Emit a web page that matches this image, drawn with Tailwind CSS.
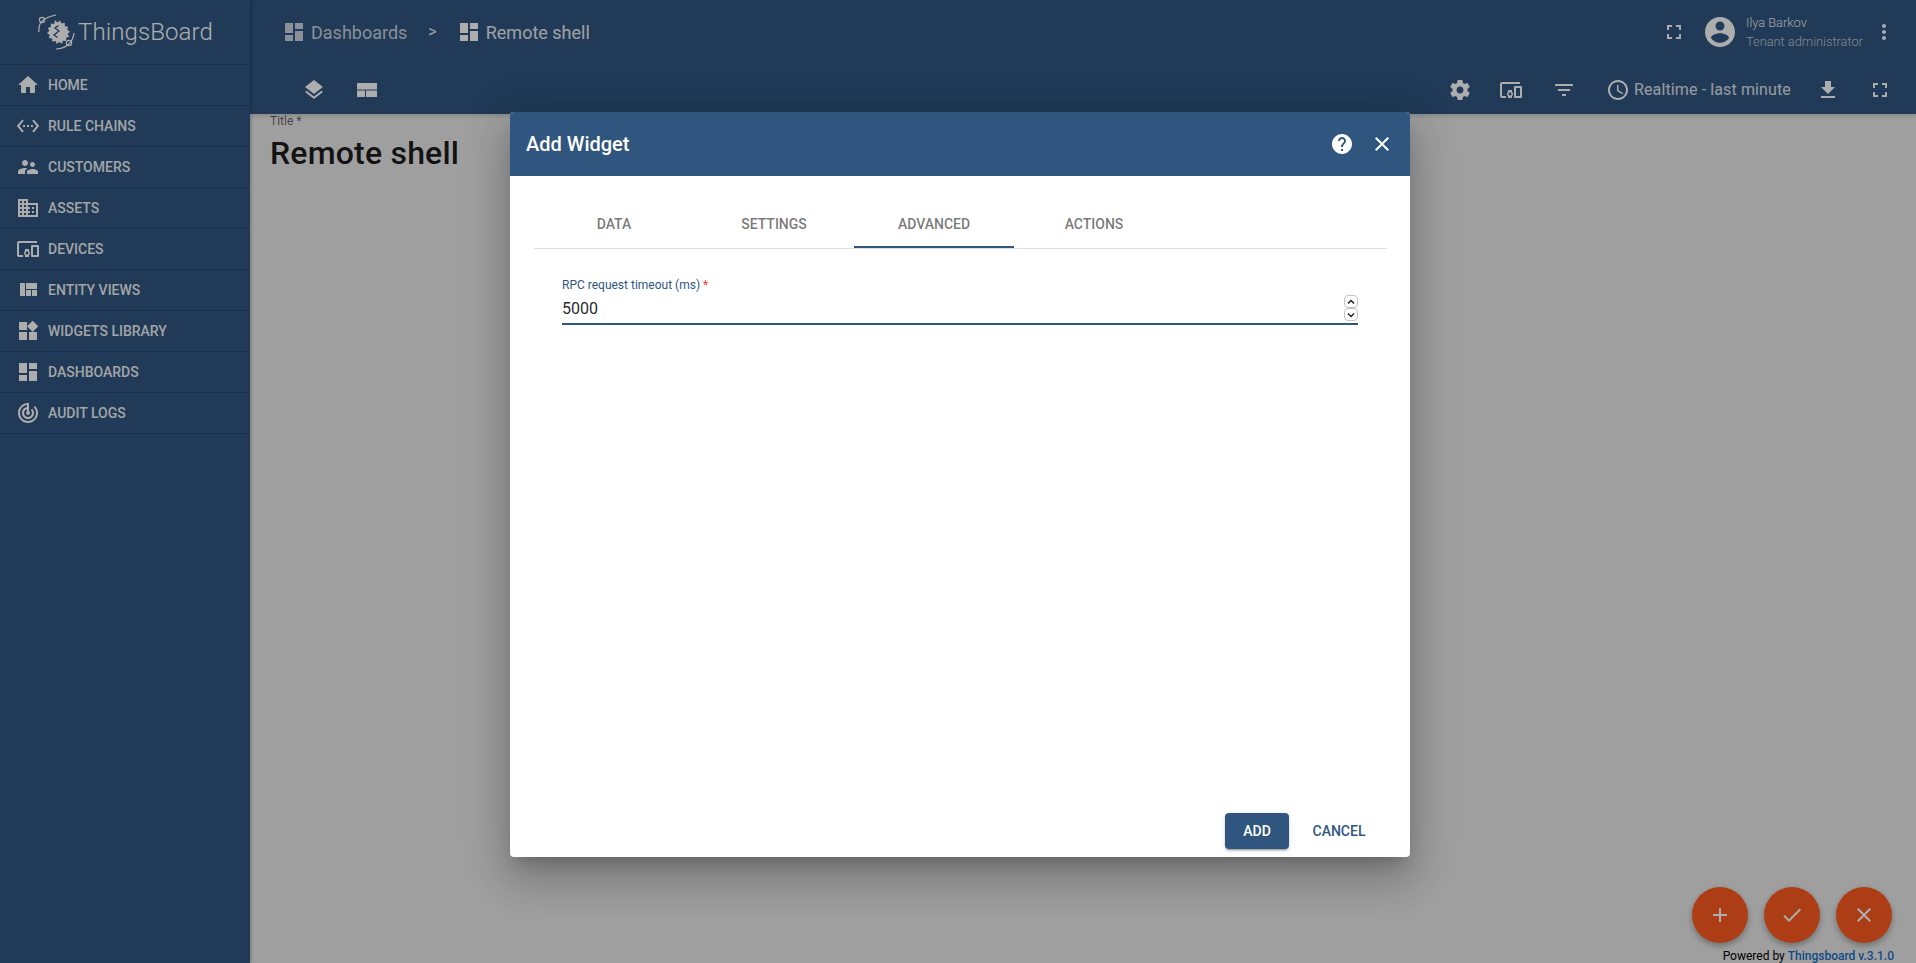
<!DOCTYPE html>
<html>
<head>
<meta charset="utf-8">
<script src="https://cdn.jsdelivr.net/npm/@tailwindcss/browser@4"></script>
<title>ThingsBoard</title>
</head>
<body class="font-['Roboto',sans-serif] overflow-hidden">
<div class="relative flex h-[963px] w-[1916px] overflow-hidden bg-[#ebebeb]">
  <!-- Sidebar -->
  <aside class="relative z-10 flex w-[250px] shrink-0 flex-col bg-[#305680] text-white shadow-[0_0_4px_rgba(0,0,0,0.4)]">
    <div class="flex h-[65px] items-center border-b border-black/15 pl-[37px]">
      <svg class="h-[40px] w-[40px] shrink-0" viewBox="0 0 40 40" fill="none" stroke="#fff">
        <path d="M2 20 C1 12 4 6 19 3" stroke-width="1.2"/>
        <circle cx="5" cy="8" r="2.6" stroke-width="1.2"/>
        <path d="M19 37 C28 37 36 31 37 21" stroke-width="1.2"/>
        <circle cx="32" cy="31" r="2.6" stroke-width="1.2"/>
        <path fill="#fff" stroke="none" d="M18 8l2.5 2.6 2.7-2.2 1.3 3.2 3.2-.8.2 3.4 3.3.5-1 3.1 2.8 1.9-2.4 2.3 1.7 2.8-3.2 1 .2 3.2-3.3-.3-1 3.1-2.8-1.9-2.4 2.2-1.2-3.1-3.2.8-.3-3.3-3.3-.5 1-3.1-2.8-1.8 2.4-2.4-1.7-2.8 3.2-1-.1-3.3 3.3.3z"/>
        <path d="M21.5 13.5l-3.5 2.5 4 3-5 4 3.5 2.5" stroke="#305680" stroke-width="1.3"/>
      </svg>
      <span class="ml-[1px] text-[24px] font-light leading-none tracking-[0.1px] text-white">ThingsBoard</span>
    </div>
    <nav class="text-[14px] font-medium uppercase text-white/95">
      <a class="flex h-[41px] items-center border-b border-black/15 pl-[16px]"><svg class="h-[24px] w-[24px] shrink-0" viewBox="0 0 24 24" fill="#fff"><path d="M10 20v-6h4v6h5v-8h3L12 3 2 12h3v8z"/></svg><span class="ml-[8px]">Home</span></a>
      <a class="flex h-[41px] items-center border-b border-black/15 pl-[16px]"><svg class="h-[24px] w-[24px] shrink-0" viewBox="0 0 24 24" fill="#fff"><path d="M7.77 6.76L6.23 5.48.82 12l5.41 6.52 1.54-1.28L3.42 12l4.35-5.24zM7 13h2v-2H7v2zm10-2h-2v2h2v-2zm-6 2h2v-2h-2v2zm6.77-7.52l-1.54 1.28L20.58 12l-4.35 5.24 1.54 1.28L23.18 12l-5.41-6.52z"/></svg><span class="ml-[8px]">Rule chains</span></a>
      <a class="flex h-[41px] items-center border-b border-black/15 pl-[16px]"><svg class="h-[24px] w-[24px] shrink-0" viewBox="0 0 24 24" fill="#fff"><path d="M16.5 12c1.38 0 2.49-1.12 2.49-2.5S17.88 7 16.5 7C15.12 7 14 8.12 14 9.5s1.12 2.5 2.5 2.5zM9 11c1.66 0 2.99-1.34 2.99-3S10.66 5 9 5C7.34 5 6 6.34 6 8s1.34 3 3 3zm7.5 3c-1.83 0-5.5.92-5.5 2.75V19h11v-2.25c0-1.83-3.67-2.75-5.5-2.75zM9 13c-2.33 0-7 1.17-7 3.5V19h7v-2.25c0-.85.33-2.34 2.37-3.47C10.5 13.1 9.66 13 9 13z"/></svg><span class="ml-[8px]">Customers</span></a>
      <a class="flex h-[41px] items-center border-b border-black/15 pl-[16px]"><svg class="h-[24px] w-[24px] shrink-0" viewBox="0 0 24 24" fill="#fff"><path d="M12 7V3H2v18h20V7H12zM6 19H4v-2h2v2zm0-4H4v-2h2v2zm0-4H4V9h2v2zm0-4H4V5h2v2zm4 12H8v-2h2v2zm0-4H8v-2h2v2zm0-4H8V9h2v2zm0-4H8V5h2v2zm10 12h-8v-2h2v-2h-2v-2h2v-2h-2V9h8v10zm-2-8h-2v2h2v-2zm0 4h-2v2h2v-2z"/></svg><span class="ml-[8px]">Assets</span></a>
      <a class="flex h-[41px] items-center border-b border-black/15 pl-[16px]"><svg class="h-[24px] w-[24px] shrink-0" viewBox="0 0 24 24" fill="#fff"><path d="M3 6h18V4H3c-1.1 0-2 .9-2 2v12c0 1.1.9 2 2 2h4v-2H3V6zm10 6H9v1.78c-.61.55-1 1.33-1 2.22s.39 1.67 1 2.22V20h4v-1.78c.61-.55 1-1.34 1-2.22s-.39-1.67-1-2.22V12zm-2 5.5c-.83 0-1.5-.67-1.5-1.5s.67-1.5 1.5-1.5 1.5.67 1.5 1.5-.67 1.5-1.5 1.5zM22 8h-6c-.5 0-1 .5-1 1v10c0 .5.5 1 1 1h6c.5 0 1-.5 1-1V9c0-.5-.5-1-1-1zm-1 10h-4v-8h4v8z"/></svg><span class="ml-[8px]">Devices</span></a>
      <a class="flex h-[41px] items-center border-b border-black/15 pl-[16px]"><svg class="h-[24px] w-[24px] shrink-0" viewBox="0 0 24 24" fill="#fff"><path d="M10 18h5v-6h-5v6zm-6 0h5V5H4v13zm12 0h5v-6h-5v6zM10 5v6h11V5H10z"/></svg><span class="ml-[8px]">Entity views</span></a>
      <a class="flex h-[41px] items-center border-b border-black/15 pl-[16px]"><svg class="h-[24px] w-[24px] shrink-0" viewBox="0 0 24 24" fill="#fff"><path d="M13 13v8h8v-8h-8zM3 21h8v-8H3v8zM3 3v8h8V3H3zm13.66-1.31L11 7.34 16.66 13l5.66-5.66-5.66-5.65z"/></svg><span class="ml-[8px]">Widgets library</span></a>
      <a class="flex h-[41px] items-center border-b border-black/15 pl-[16px]"><svg class="h-[24px] w-[24px] shrink-0" viewBox="0 0 24 24" fill="#fff"><path d="M3 13h8V3H3v10zm0 8h8v-6H3v6zm10 0h8V11h-8v10zm0-18v6h8V3h-8z"/></svg><span class="ml-[8px]">Dashboards</span></a>
      <a class="flex h-[41px] items-center border-b border-black/15 pl-[16px]"><svg class="h-[24px] w-[24px] shrink-0" viewBox="0 0 24 24" fill="#fff"><path d="M19.07 4.93l-1.41 1.41C19.1 7.79 20 9.79 20 12c0 4.42-3.58 8-8 8s-8-3.58-8-8c0-4.08 3.05-7.44 7-7.93v2.02C8.16 6.57 6 9.03 6 12c0 3.31 2.69 6 6 6s6-2.69 6-6c0-1.66-.67-3.16-1.76-4.24l-1.41 1.41C15.55 9.9 16 10.9 16 12c0 2.21-1.79 4-4 4s-4-1.79-4-4c0-1.86 1.28-3.41 3-3.86v2.14c-.6.35-1 .98-1 1.72 0 1.1.9 2 2 2s2-.9 2-2c0-.74-.4-1.38-1-1.72V2h-1C6.48 2 2 6.48 2 12s4.48 10 10 10 10-4.48 10-10c0-2.76-1.12-5.26-2.93-7.07z"/></svg><span class="ml-[8px]">Audit logs</span></a>
    </nav>
  </aside>

  <!-- Right column -->
  <div class="flex min-w-0 flex-1 flex-col">
    <header class="h-[114px] shrink-0 bg-[#305680] text-white shadow-[0_2px_4px_rgba(0,0,0,0.15)]">
      <div class="flex h-[64px] items-center pl-[32px] pr-[20px]">
        <svg class="h-[24px] w-[24px] shrink-0" viewBox="0 0 24 24" fill="#fff" fill-opacity="0.75"><path d="M3 13h8V3H3v10zm0 8h8v-6H3v6zm10 0h8V11h-8v10zm0-18v6h8V3h-8z"/></svg>
        <span class="ml-[5px] text-[18px] text-white/75">Dashboards</span>
        <span class="ml-[21px] text-[16px] text-white/90">&gt;</span>
        <svg class="ml-[20px] h-[24px] w-[24px] shrink-0" viewBox="0 0 24 24" fill="#fff"><path d="M3 13h8V3H3v10zm0 8h8v-6H3v6zm10 0h8V11h-8v10zm0-18v6h8V3h-8z"/></svg>
        <span class="ml-[5px] text-[18px] text-white/90">Remote shell</span>
        <svg class="ml-auto h-[24px] w-[24px] shrink-0" viewBox="0 0 24 24" fill="#fff"><path d="M7 14H5v5h5v-2H7v-3zm-2-4h2V7h3V5H5v5zm12 7h-3v2h5v-5h-2v3zM14 5v2h3v3h2V5h-5z"/></svg>
        <svg class="ml-[16px] h-[36px] w-[36px] shrink-0" viewBox="0 0 24 24" fill="#fff"><path d="M12 2C6.48 2 2 6.48 2 12s4.48 10 10 10 10-4.48 10-10S17.52 2 12 2zm0 3c1.66 0 3 1.34 3 3s-1.34 3-3 3-3-1.34-3-3 1.34-3 3-3zm0 14.2c-2.5 0-4.71-1.28-6-3.22.03-1.99 4-3.08 6-3.08 1.99 0 5.97 1.09 6 3.08-1.29 1.94-3.5 3.22-6 3.22z"/></svg>
        <div class="ml-[8px] flex w-[118px] flex-col gap-[5px] text-[12.8px] font-light leading-[14px]">
          <span class="text-white/90">Ilya Barkov</span>
          <span class="whitespace-nowrap text-white/70">Tenant administrator</span>
        </div>
        <svg class="ml-[8px] h-[24px] w-[24px] shrink-0" viewBox="0 0 24 24" fill="#fff"><path d="M12 8c1.1 0 2-.9 2-2s-.9-2-2-2-2 .9-2 2 .9 2 2 2zm0 2c-1.1 0-2 .9-2 2s.9 2 2 2 2-.9 2-2-.9-2-2-2zm0 6c-1.1 0-2 .9-2 2s.9 2 2 2 2-.9 2-2-.9-2-2-2z"/></svg>
      </div>
      <div class="flex h-[50px] items-center pl-[52px] pr-[24px] pt-[2px]">
        <svg class="h-[24px] w-[24px] shrink-0" viewBox="0 0 24 24" fill="#fff"><path d="M11.99 18.54l-7.37-5.73L3 14.07l9 7 9-7-1.63-1.27-7.38 5.74zM12 16l7.36-5.73L21 9l-9-7-9 7 1.63 1.27L12 16z"/></svg>
        <svg class="ml-[29px] h-[24px] w-[24px] shrink-0" viewBox="0 0 24 24" fill="#fff"><path d="M2 5h20v6.5H2zM2 12.5h8V19H2zM11 12.5h11V19H11z"/></svg>
        <svg class="ml-auto h-[24px] w-[24px] shrink-0" viewBox="0 0 24 24" fill="#fff"><path d="M19.43 12.98c.04-.32.07-.64.07-.98s-.03-.66-.07-.98l2.11-1.65c.19-.15.24-.42.12-.64l-2-3.46c-.12-.22-.39-.3-.61-.22l-2.49 1c-.52-.4-1.08-.73-1.69-.98l-.38-2.65C14.46 2.18 14.25 2 14 2h-4c-.25 0-.46.18-.49.42l-.38 2.65c-.61.25-1.17.59-1.69.98l-2.49-1c-.23-.09-.49 0-.61.22l-2 3.46c-.13.22-.07.49.12.64l2.11 1.65c-.04.32-.07.65-.07.98s.03.66.07.98l-2.11 1.65c-.19.15-.24.42-.12.64l2 3.46c.12.22.39.3.61.22l2.49-1c.52.4 1.08.73 1.69.98l.38 2.65c.03.24.24.42.49.42h4c.25 0 .46-.18.49-.42l.38-2.65c.61-.25 1.17-.59 1.69-.98l2.49 1c.23.09.49 0 .61-.22l2-3.46c.12-.22.07-.49-.12-.64l-2.11-1.65zM12 15.5c-1.93 0-3.5-1.57-3.5-3.5s1.57-3.5 3.5-3.5 3.5 1.57 3.5 3.5-1.57 3.5-3.5 3.5z"/></svg>
        <svg class="ml-[27px] h-[24px] w-[24px] shrink-0" viewBox="0 0 24 24" fill="#fff"><path d="M3 6h18V4H3c-1.1 0-2 .9-2 2v12c0 1.1.9 2 2 2h4v-2H3V6zm10 6H9v1.78c-.61.55-1 1.33-1 2.22s.39 1.67 1 2.22V20h4v-1.78c.61-.55 1-1.34 1-2.22s-.39-1.67-1-2.22V12zm-2 5.5c-.83 0-1.5-.67-1.5-1.5s.67-1.5 1.5-1.5 1.5.67 1.5 1.5-.67 1.5-1.5 1.5zM22 8h-6c-.5 0-1 .5-1 1v10c0 .5.5 1 1 1h6c.5 0 1-.5 1-1V9c0-.5-.5-1-1-1zm-1 10h-4v-8h4v8z"/></svg>
        <svg class="ml-[29px] h-[24px] w-[24px] shrink-0" viewBox="0 0 24 24" fill="#fff"><path d="M10 18h4v-2h-4v2zM3 6v2h18V6H3zm3 7h12v-2H6v2z"/></svg>
        <svg class="ml-[30px] h-[24px] w-[24px] shrink-0" viewBox="0 0 24 24" fill="#fff"><path d="M11.99 2C6.47 2 2 6.48 2 12s4.47 10 9.99 10C17.52 22 22 17.52 22 12S17.52 2 11.99 2zM12 20c-4.42 0-8-3.58-8-8s3.58-8 8-8 8 3.58 8 8-3.58 8-8 8zm.5-13H11v6l5.25 3.15.75-1.23-4.5-2.67z"/></svg>
        <span class="ml-[4px] w-[156px] whitespace-nowrap text-[16px] tracking-[0.12px] text-white/85">Realtime - last minute</span>
        <svg class="ml-[26px] h-[24px] w-[24px] shrink-0" viewBox="0 0 24 24" fill="#fff"><path d="M19 9h-4V3H9v6H5l7 7 7-7zM5 18v2h14v-2H5z"/></svg>
        <svg class="ml-[28px] h-[24px] w-[24px] shrink-0" viewBox="0 0 24 24" fill="#fff"><path d="M7 14H5v5h5v-2H7v-3zm-2-4h2V7h3V5H5v5zm12 7h-3v2h5v-5h-2v3zM14 5v2h3v3h2V5h-5z"/></svg>
      </div>
    </header>
    <main class="flex-1 pl-[20px]">
      <div class="text-[12px] leading-[14px] text-black/60">Title *</div>
      <h1 class="mt-[5px] text-[32px] font-medium leading-[40px] tracking-[0.2px] text-black/90">Remote shell</h1>
    </main>
  </div>

  <!-- Floating action buttons -->
  <div class="absolute right-[24px] top-[887px] flex gap-[16px]">
    <div class="flex h-[56px] w-[56px] items-center justify-center rounded-full bg-[#ff5b20] shadow-[0_3px_6px_rgba(0,0,0,0.3)]"><svg class="h-[24px] w-[24px]" viewBox="0 0 24 24" fill="#fff"><path d="M19 13h-6v6h-2v-6H5v-2h6V5h2v6h6v2z"/></svg></div>
    <div class="flex h-[56px] w-[56px] items-center justify-center rounded-full bg-[#ff5b20] shadow-[0_3px_6px_rgba(0,0,0,0.3)]"><svg class="h-[24px] w-[24px]" viewBox="0 0 24 24" fill="#fff"><path d="M9 16.17L4.83 12l-1.42 1.41L9 19 21 7l-1.41-1.41z"/></svg></div>
    <div class="flex h-[56px] w-[56px] items-center justify-center rounded-full bg-[#ff5b20] shadow-[0_3px_6px_rgba(0,0,0,0.3)]"><svg class="h-[24px] w-[24px]" viewBox="0 0 24 24" fill="#fff"><path d="M19 6.41L17.59 5 12 10.59 6.41 5 5 6.41 10.59 12 5 17.59 6.41 19 12 13.41 17.59 19 19 17.59 13.41 12z"/></svg></div>
  </div>
  <div class="absolute right-[22px] top-[949px] text-[12px] leading-[14px] text-black">Powered by <span class="font-medium text-[#176ec6]">Thingsboard v.3.1.0</span></div>

  <!-- Backdrop -->
  <div class="absolute inset-0 z-20 bg-black/32 pl-[510px] pt-[112px]">
    <!-- Dialog -->
    <div class="flex h-[745px] w-[900px] flex-col overflow-hidden rounded-[4px] bg-white shadow-[0_11px_15px_-7px_rgba(0,0,0,0.2),0_24px_38px_3px_rgba(0,0,0,0.14),0_9px_46px_8px_rgba(0,0,0,0.12)]">
      <div class="flex h-[64px] shrink-0 items-center bg-[#305680] pl-[16px] pr-[16px] text-white">
        <span class="text-[20px] font-medium">Add Widget</span>
        <svg class="ml-auto h-[24px] w-[24px]" viewBox="0 0 24 24" fill="#fff"><path d="M12 2C6.48 2 2 6.48 2 12s4.48 10 10 10 10-4.48 10-10S17.52 2 12 2zm1 17h-2v-2h2v2zm2.07-7.75l-.9.92C13.45 12.9 13 13.5 13 15h-2v-.5c0-1.1.45-2.1 1.17-2.83l1.24-1.26c.37-.36.59-.86.59-1.41 0-1.1-.9-2-2-2s-2 .9-2 2H8c0-2.21 1.79-4 4-4s4 1.79 4 4c0 .88-.36 1.68-.93 2.25z"/></svg>
        <svg class="ml-[16px] h-[24px] w-[24px]" viewBox="0 0 24 24" fill="#fff"><path d="M19 6.41L17.59 5 12 10.59 6.41 5 5 6.41 10.59 12 5 17.59 6.41 19 12 13.41 17.59 19 19 17.59 13.41 12z"/></svg>
      </div>
      <div class="ml-[24px] mr-[23px] mt-[24px] flex h-[49px] shrink-0 border-b border-[#e0e0e0] text-[14px] font-medium uppercase text-black/55">
        <div class="flex h-[48px] w-[160px] items-center justify-center">Data</div>
        <div class="flex h-[48px] w-[160px] items-center justify-center">Settings</div>
        <div class="flex h-[48px] w-[160px] items-center justify-center border-b-2 border-[#305680] pt-[2px]">Advanced</div>
        <div class="flex h-[48px] w-[160px] items-center justify-center">Actions</div>
      </div>
      <div class="ml-[52px] mr-[52px] mt-[28px] shrink-0">
        <div class="text-[12px] leading-[16px] text-[#305680]">RPC request timeout (ms) <span class="text-[#f44336]">*</span></div>
        <div class="relative flex h-[32px] items-start border-b-2 border-[#305680] pt-[6px] text-[16px] leading-[20px] text-black/87">5000
          <div class="absolute right-0 top-[2px] flex w-[14px] flex-col">
            <div class="flex h-[13px] items-center justify-center rounded-[4px] border border-[#c4c4c4]"><svg class="h-[8px] w-[8px]" viewBox="0 0 8 8" fill="none" stroke="#222" stroke-width="1.5"><path d="M1 5.5L4 2.5L7 5.5"/></svg></div>
            <div class="flex h-[13px] items-center justify-center rounded-[4px] border border-[#c4c4c4]"><svg class="h-[8px] w-[8px]" viewBox="0 0 8 8" fill="none" stroke="#222" stroke-width="1.5"><path d="M1 2.5L4 5.5L7 2.5"/></svg></div>
          </div>
        </div>
      </div>
      <div class="mt-auto flex justify-end gap-[8px] pb-[8px] pr-[29px] text-[14px] font-medium uppercase">
        <div class="flex h-[36px] w-[64px] items-center justify-center rounded-[4px] bg-[#305680] text-white shadow-[0_3px_1px_-2px_rgba(0,0,0,0.2),0_2px_2px_0_rgba(0,0,0,0.14),0_1px_5px_0_rgba(0,0,0,0.12)]">Add</div>
        <div class="flex h-[36px] w-[84px] items-center justify-center text-[#305680]">Cancel</div>
      </div>
    </div>
  </div>
</div>
</body>
</html>
